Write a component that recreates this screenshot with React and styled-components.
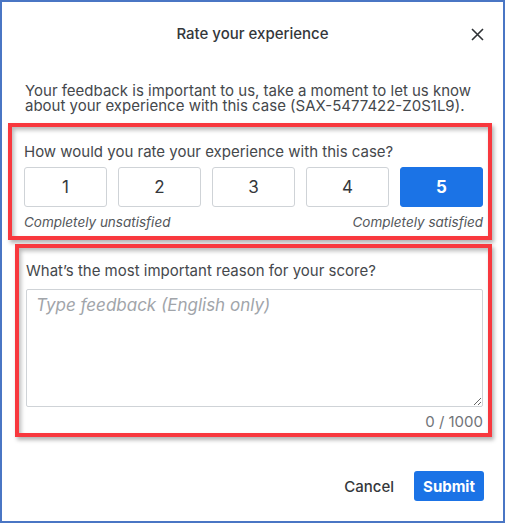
import React, { useState } from "react";
import styled, { createGlobalStyle } from "styled-components";

const GlobalStyle = createGlobalStyle`
  html, body {
    margin: 0;
    padding: 0;
    background: #ffffff;
  }
  * {
    box-sizing: border-box;
  }
`;

const Frame = styled.div`
  width: 505px;
  height: 523px;
  border: 2px solid #4a76c4;
  background: #ffffff;
  font-family: Inter, "Liberation Sans", sans-serif;
  color: #3c3f43;
  display: flex;
  flex-direction: column;
`;

const Header = styled.header`
  height: 62px;
  display: flex;
  align-items: center;
  justify-content: center;
  position: relative;
`;

const Title = styled.h2`
  margin: 0;
  font-size: 15px;
  font-weight: 500;
  color: #34373b;
`;

const CloseButton = styled.button`
  position: absolute;
  right: 18px;
  top: 24px;
  width: 16px;
  height: 16px;
  padding: 0;
  border: none;
  background: none;
  display: flex;
  align-items: center;
  justify-content: center;
  cursor: pointer;
`;

const Intro = styled.p`
  margin: 19px 20px 0 23px;
  font-size: 15px;
  line-height: 15px;
  color: #45484c;
`;

const Section = styled.section`
  margin: ${(p) => p.$margin};
  border: 4px solid #f8383e;
  padding: ${(p) => p.$padding};
  box-shadow: 2px 3px 4px rgba(0, 0, 0, 0.3),
    inset 2px 3px 4px rgba(0, 0, 0, 0.28);
`;

const Question = styled.div`
  font-size: 15px;
  line-height: 17px;
  color: #45484c;
`;

const RatingRow = styled.div`
  display: flex;
  gap: 11px;
  margin-top: 7px;
`;

const RatingButton = styled.button`
  flex: 1;
  height: 40px;
  border-radius: 3px;
  border: 1px solid ${(p) => (p.$active ? "#1b73e6" : "#cfd3d7")};
  background: ${(p) => (p.$active ? "#1b73e6" : "#ffffff")};
  color: ${(p) => (p.$active ? "#ffffff" : "#34373b")};
  font-family: Inter, "Liberation Sans", sans-serif;
  font-size: 17px;
  font-weight: ${(p) => (p.$active ? 700 : 400)};
  cursor: pointer;
`;

const Scale = styled.div`
  display: flex;
  justify-content: space-between;
  margin-top: 8px;
  font-size: 13.5px;
  line-height: 15px;
  font-style: italic;
  color: #54575b;
`;

const Feedback = styled.textarea`
  display: block;
  width: 100%;
  height: 118px;
  margin-top: 10px;
  border: 1px solid #cfd3d7;
  border-radius: 2px;
  padding: 5px 9px;
  font-family: Inter, "Liberation Sans", sans-serif;
  font-size: 17px;
  color: #34373b;
  resize: vertical;
  &::placeholder {
    color: #a1a5aa;
    font-style: italic;
  }
`;

const Counter = styled.div`
  margin-top: 7px;
  text-align: right;
  font-size: 15px;
  line-height: 15px;
  color: #707378;
`;

const Footer = styled.footer`
  display: flex;
  justify-content: flex-end;
  align-items: center;
  gap: 20px;
  margin: 34px 19px 0 0;
`;

const TextButton = styled.button`
  border: none;
  background: none;
  padding: 0;
  font-family: Inter, "Liberation Sans", sans-serif;
  font-size: 15px;
  font-weight: 500;
  color: #34373b;
  cursor: pointer;
`;

const PrimaryButton = styled.button`
  width: 70px;
  height: 30px;
  border: none;
  border-radius: 3px;
  background: #1b73e6;
  color: #ffffff;
  font-family: Inter, "Liberation Sans", sans-serif;
  font-size: 15px;
  font-weight: 700;
  cursor: pointer;
`;

const App = () => {
  const [score, setScore] = useState(5);
  const [text, setText] = useState("");

  return (
    <>
      <GlobalStyle />
      <Frame>
        <Header>
          <Title>Rate your experience</Title>
          <CloseButton aria-label="Close">
            <svg width="13" height="13" viewBox="0 0 13 13">
              <path d="M1 1L12 12M12 1L1 12" stroke="#2f3236" strokeWidth="1.6" />
            </svg>
          </CloseButton>
        </Header>
        <Intro>
          Your feedback is important to us, take a moment to let us know
          about your experience with this case (SAX-5477422-Z0S1L9).
        </Intro>

        {/* Rating */}
        <Section $margin="10px 11px 0 6px" $padding="16px 5px 6px 12px">
          <Question>How would you rate your experience with this case?</Question>
          <RatingRow>
            {[1, 2, 3, 4, 5].map((n) => (
              <RatingButton key={n} $active={n === score} onClick={() => setScore(n)}>
                {n}
              </RatingButton>
            ))}
          </RatingRow>
          <Scale>
            <span>Completely unsatisfied</span>
            <span>Completely satisfied</span>
          </Scale>
        </Section>

        {/* Reason */}
        <Section $margin="4px 11px 0 13px" $padding="14px 5px 4px 7px">
          <Question>What’s the most important reason for your score?</Question>
          <Feedback
            placeholder="Type feedback (English only)"
            value={text}
            maxLength={1000}
            onChange={(e) => setText(e.target.value)}
          />
          <Counter>{text.length} / 1000</Counter>
        </Section>

        <Footer>
          <TextButton>Cancel</TextButton>
          <PrimaryButton>Submit</PrimaryButton>
        </Footer>
      </Frame>
    </>
  );
};

export default App;
